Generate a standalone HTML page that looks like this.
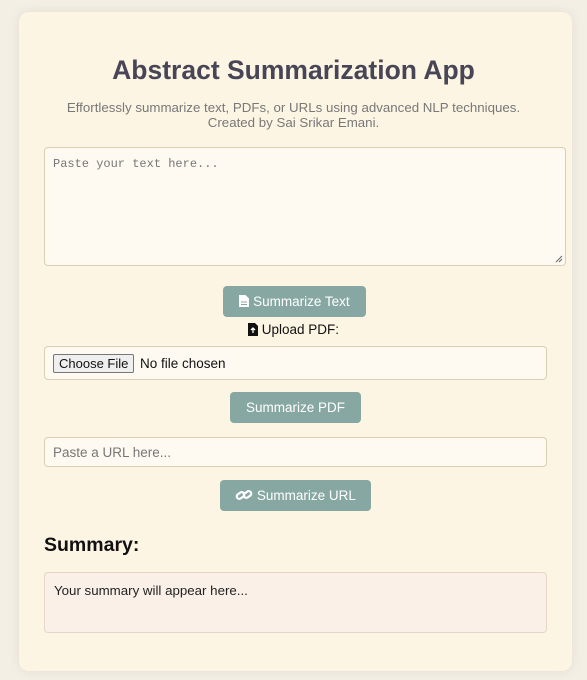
<!DOCTYPE html>
<html><head><style>
body{margin:0;background:#f4efe4;font-family:"Liberation Sans",sans-serif;width:587px;height:680px;overflow:hidden;position:relative}
.card{position:absolute;left:19px;top:12px;width:553px;height:659px;background:#fdf5e3;border-radius:10px;box-shadow:0 0 12px rgba(0,0,0,0.08)}
.abs{position:absolute}
h1{position:absolute;left:0;width:587px;top:55px;margin:0;text-align:center;font-size:26.5px;color:#484656;font-weight:bold}
.sub{left:0;width:587px;text-align:center;font-size:13.3px;color:#787878;line-height:15px;top:100px}
.ta{left:44px;top:147px;width:522px;height:119px;border:1px solid #dccdb5;border-radius:4px;background:#fef9f1;font-family:"Liberation Mono",monospace;font-size:12px;color:#777;box-sizing:border-box;padding:9px 8px}
.btn{background:#87a8a2;color:#fff;font-size:13.5px;border-radius:4px;text-align:center;line-height:31px;height:31px}
.inp{border:1px solid #dccdb5;border-radius:4px;background:#fef9f1;box-sizing:border-box}
</style></head><body>
<div class="card"></div>
<h1>Abstract Summarization App</h1>
<div class="abs sub">Effortlessly summarize text, PDFs, or URLs using advanced NLP techniques.<br>Created by Sai Srikar Emani.</div>
<div class="abs ta">Paste your text here...
<svg style="position:absolute;right:2px;bottom:2px" width="9" height="9"><path d="M8 2L2 8M8 5L5 8" stroke="#666" stroke-width="1"/></svg></div>
<div class="abs btn" style="left:223px;top:286px;width:143px"><svg width="10" height="12" style="vertical-align:-1px"><path d="M0 0H6.5L10 3.5V12H0Z" fill="#fff"/><path d="M2 7H8M2 9.5H8" stroke="#87a8a2" stroke-width="1"/></svg> Summarize Text</div>
<div class="abs" style="left:0;width:587px;text-align:center;top:322px;font-size:13.5px;color:#111">
<svg width="10" height="13" style="vertical-align:-2px"><path d="M0 0H7L10 3V13H0Z" fill="#111"/><path d="M5 10V5M3 7L5 5L7 7" stroke="#fff" stroke-width="1.3" fill="none"/></svg> Upload PDF:</div>
<div class="abs inp" style="left:44px;top:346px;width:503px;height:34px;font-size:13.5px;color:#111">
<span style="position:absolute;left:8px;top:7px;border:1px solid #777;background:#efefef;padding:0 5px;font-size:13px;line-height:17px;border-radius:2px">Choose File</span>
<span style="position:absolute;left:95px;top:9px">No file chosen</span></div>
<div class="abs btn" style="left:230px;top:392px;width:131px">Summarize PDF</div>
<div class="abs inp" style="left:44px;top:437px;width:503px;height:30px;font-size:13.5px;color:#777;padding:7px 8px">Paste a URL here...</div>
<div class="abs btn" style="left:220px;top:480px;width:151px">
<svg width="18" height="12" style="vertical-align:-1px"><g fill="none" stroke="#fff" stroke-width="2.2"><rect x="1.5" y="4" width="8" height="5" rx="2.5" transform="rotate(-35 5.5 6.5)"/><rect x="8.5" y="3" width="8" height="5" rx="2.5" transform="rotate(-35 12.5 5.5)"/></g></svg> Summarize URL</div>
<div class="abs" style="left:44px;top:534px;font-size:19.5px;font-weight:bold;color:#111">Summary:</div>
<div class="abs" style="left:44px;top:572px;width:503px;height:61px;box-sizing:border-box;border:1px solid #e6d6c6;border-radius:4px;background:#fbf0e7;padding:10px 9px;font-size:13.3px;color:#222">Your summary will appear here...</div>
</body></html>
